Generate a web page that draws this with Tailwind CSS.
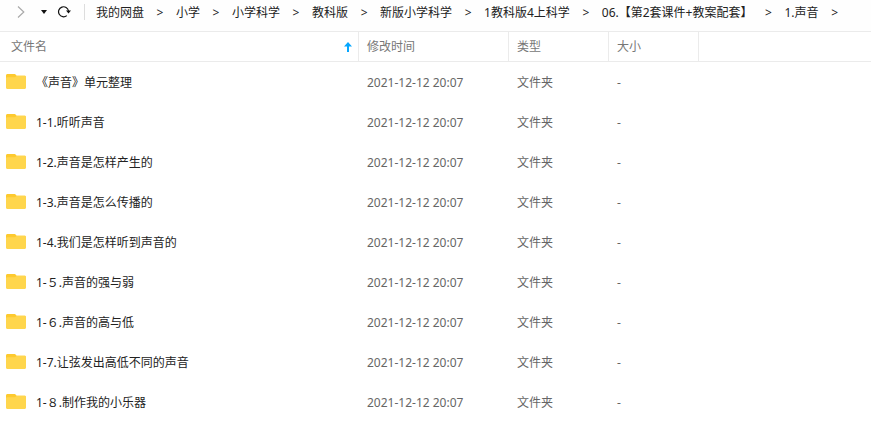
<!DOCTYPE html>
<html lang="zh-CN">

<head>
    <meta charset="UTF-8">
    <meta name="viewport" content="width=device-width, initial-scale=1.0">
    <title>我的网盘</title>
    <script src="https://cdn.jsdelivr.net/npm/@tailwindcss/browser@4"></script>
</head>

<body class="bg-white text-[#222222] text-[12px] leading-4 font-['Noto_Sans','Noto_Sans_CJK_SC',sans-serif] overflow-x-hidden">

    <!-- folder icon shared by all rows -->
    <svg class="hidden">
        <symbol id="folder" viewBox="0 0 20 16">
            <path fill="#fdca2f" d="M1.500 0H8c1 0 1.500.4 2 1l.8.800H18.500c.9 0 1.500.6 1.500 1.500V8H0V1.500C0 .6.6 0 1.500 0z" />
            <path fill="#ffd64d" d="M0 4.500C0 3.600.6 3.200 1.400 3.200H8c1 0 1.500-.3 2-.7.400-.4.800-.7 1.500-.7h7c.9 0 1.500.6 1.500 1.500v10.200c0 .9-.6 1.500-1.500 1.500h-17C.6 15 0 14.400 0 13.500z" />
        </symbol>
    </svg>

    <header class="flex items-center h-[31px] pb-[7px] whitespace-nowrap bg-[#fefefe]">
        <button type="button" aria-label="前进" class="ml-[17px] w-2 shrink-0">
            <svg class="w-2 h-3" viewBox="0 0 8 12" fill="none" stroke="#aaaaaa" stroke-width="1.200"><path d="M1 .5 6.800 6 1 11.500" /></svg>
        </button>
        <button type="button" aria-label="历史记录" class="ml-[15px] w-2 shrink-0">
            <svg class="w-2 h-2" viewBox="0 0 8 8" fill="#111111"><path d="M1 2h6L4 6z" /></svg>
        </button>
        <button type="button" aria-label="刷新" class="ml-[9px] w-[14px] shrink-0">
            <svg class="w-[14px] h-3" viewBox="0 0 14 12">
                <path d="M9.800 9.600A5 5 0 1 1 11.500 5" fill="none" stroke="#111111" stroke-width="1.200" />
                <path d="M9 4.500h5l-2.500 3z" fill="#111111" />
            </svg>
        </button>
        <span class="ml-[13px] w-px h-4 bg-[#dddddd] shrink-0"></span>
        <nav aria-label="路径" class="ml-[11px] pt-px">
            <ol class="flex">
                <li class="flex"><a href="#">我的网盘</a><span class="w-8 text-center">&gt;</span></li>
                <li class="flex"><a href="#">小学</a><span class="w-8 text-center">&gt;</span></li>
                <li class="flex"><a href="#">小学科学</a><span class="w-8 text-center">&gt;</span></li>
                <li class="flex"><a href="#">教科版</a><span class="w-8 text-center">&gt;</span></li>
                <li class="flex"><a href="#">新版小学科学</a><span class="w-8 text-center">&gt;</span></li>
                <li class="flex"><a href="#">1教科版4上科学</a><span class="w-8 text-center">&gt;</span></li>
                <li class="flex"><a href="#">06.【第2套课件+教案配套】</a><span class="w-8 text-center">&gt;</span></li>
                <li class="flex"><a href="#">1.声音</a><span class="w-8 text-center">&gt;</span></li>
            </ol>
        </nav>
    </header>

    <table class="w-full table-fixed border-separate border-spacing-0 text-left text-[#666666]">
        <colgroup>
            <col class="w-[359px]">
            <col class="w-[150px]">
            <col class="w-[100px]">
            <col class="w-[90px]">
            <col>
        </colgroup>
        <thead class="text-[#777777]">
            <tr class="h-[31px]">
                <th class="border-y border-r border-[#ebebeb] font-normal pl-[11px] pr-[6px]">
                    <button type="button" class="flex w-full items-center justify-between">
                        文件名
                        <svg class="w-2 h-[10px]" viewBox="0 0 8 10" fill="#06a7ff"><path d="M4 0 8 4.500H5V10H3V4.500H0z" /></svg>
                    </button>
                </th>
                <th class="border-y border-r border-[#ebebeb] font-normal pl-2"><button type="button" class="block">修改时间</button></th>
                <th class="border-y border-r border-[#ebebeb] font-normal pl-2"><button type="button" class="block">类型</button></th>
                <th class="border-y border-r border-[#ebebeb] font-normal pl-2"><button type="button" class="block">大小</button></th>
                <td class="border-y border-[#ebebeb]"></td>
            </tr>
        </thead>
        <tbody class="[&_td]:pt-0.5">
            <tr class="h-10">
                <td class="pl-[6px]"><a href="#" class="flex items-center gap-[10px] text-[#222222]"><svg class="w-5 h-4 mb-0.5"><use href="#folder" /></svg>《声音》单元整理</a></td>
                <td class="pl-2">2021-12-12 20:07</td>
                <td class="pl-2">文件夹</td>
                <td class="pl-2">-</td>
                <td></td>
            </tr>
            <tr class="h-10">
                <td class="pl-[6px]"><a href="#" class="flex items-center gap-[10px] text-[#222222]"><svg class="w-5 h-4 mb-0.5"><use href="#folder" /></svg>1-1.听听声音</a></td>
                <td class="pl-2">2021-12-12 20:07</td>
                <td class="pl-2">文件夹</td>
                <td class="pl-2">-</td>
                <td></td>
            </tr>
            <tr class="h-10">
                <td class="pl-[6px]"><a href="#" class="flex items-center gap-[10px] text-[#222222]"><svg class="w-5 h-4 mb-0.5"><use href="#folder" /></svg>1-2.声音是怎样产生的</a></td>
                <td class="pl-2">2021-12-12 20:07</td>
                <td class="pl-2">文件夹</td>
                <td class="pl-2">-</td>
                <td></td>
            </tr>
            <tr class="h-10">
                <td class="pl-[6px]"><a href="#" class="flex items-center gap-[10px] text-[#222222]"><svg class="w-5 h-4 mb-0.5"><use href="#folder" /></svg>1-3.声音是怎么传播的</a></td>
                <td class="pl-2">2021-12-12 20:07</td>
                <td class="pl-2">文件夹</td>
                <td class="pl-2">-</td>
                <td></td>
            </tr>
            <tr class="h-10">
                <td class="pl-[6px]"><a href="#" class="flex items-center gap-[10px] text-[#222222]"><svg class="w-5 h-4 mb-0.5"><use href="#folder" /></svg>1-4.我们是怎样听到声音的</a></td>
                <td class="pl-2">2021-12-12 20:07</td>
                <td class="pl-2">文件夹</td>
                <td class="pl-2">-</td>
                <td></td>
            </tr>
            <tr class="h-10">
                <td class="pl-[6px]"><a href="#" class="flex items-center gap-[10px] text-[#222222]"><svg class="w-5 h-4 mb-0.5"><use href="#folder" /></svg>1-５.声音的强与弱</a></td>
                <td class="pl-2">2021-12-12 20:07</td>
                <td class="pl-2">文件夹</td>
                <td class="pl-2">-</td>
                <td></td>
            </tr>
            <tr class="h-10">
                <td class="pl-[6px]"><a href="#" class="flex items-center gap-[10px] text-[#222222]"><svg class="w-5 h-4 mb-0.5"><use href="#folder" /></svg>1-６.声音的高与低</a></td>
                <td class="pl-2">2021-12-12 20:07</td>
                <td class="pl-2">文件夹</td>
                <td class="pl-2">-</td>
                <td></td>
            </tr>
            <tr class="h-10">
                <td class="pl-[6px]"><a href="#" class="flex items-center gap-[10px] text-[#222222]"><svg class="w-5 h-4 mb-0.5"><use href="#folder" /></svg>1-7.让弦发出高低不同的声音</a></td>
                <td class="pl-2">2021-12-12 20:07</td>
                <td class="pl-2">文件夹</td>
                <td class="pl-2">-</td>
                <td></td>
            </tr>
            <tr class="h-10">
                <td class="pl-[6px]"><a href="#" class="flex items-center gap-[10px] text-[#222222]"><svg class="w-5 h-4 mb-0.5"><use href="#folder" /></svg>1-８.制作我的小乐器</a></td>
                <td class="pl-2">2021-12-12 20:07</td>
                <td class="pl-2">文件夹</td>
                <td class="pl-2">-</td>
                <td></td>
            </tr>
        </tbody>
    </table>
</body>

</html>
